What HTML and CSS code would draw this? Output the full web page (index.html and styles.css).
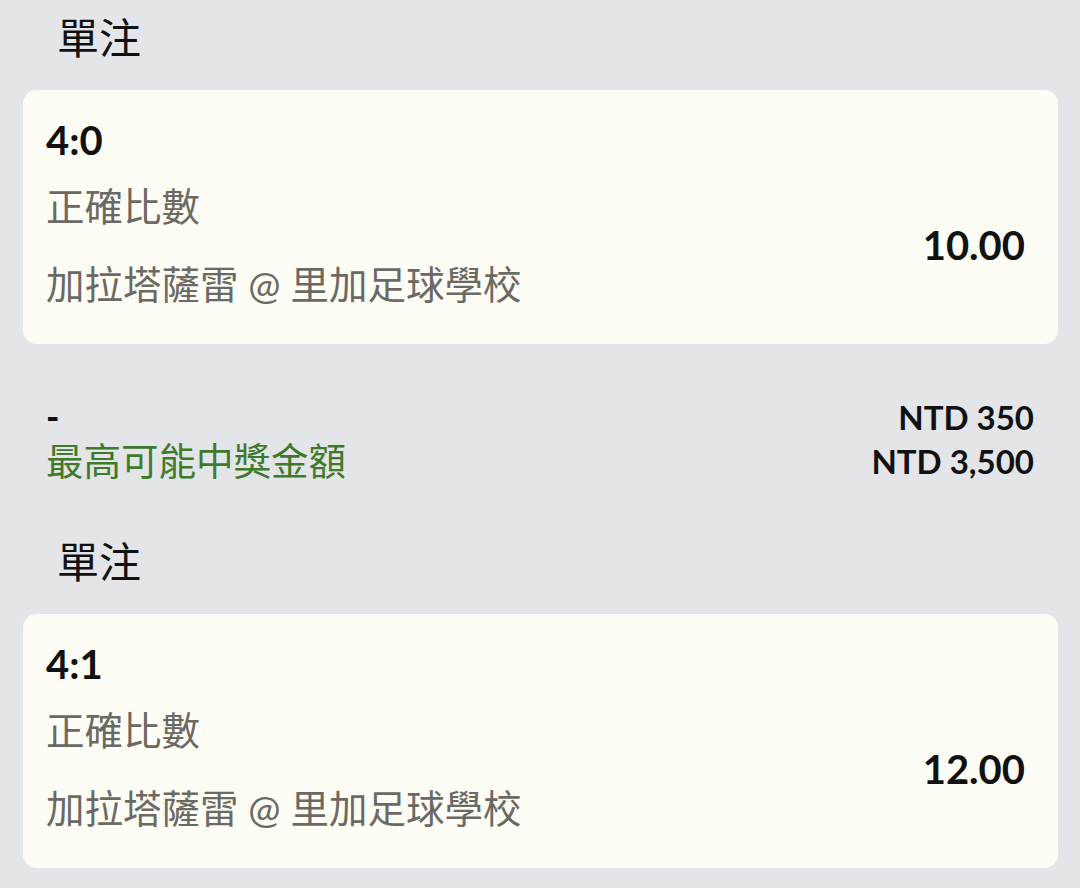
FILE: index.html
```html
<!DOCTYPE html>
<html lang="zh-Hant">
<head>
<meta charset="utf-8">
<title>單注</title>
<link rel="stylesheet" href="styles.css">
</head>
<body>
  <section class="group">
    <h2 class="group-title">單注</h2>
    <div class="card">
      <div class="bet-info">
        <div class="bet-score">4:0</div>
        <div class="bet-meta bet-type">正確比數</div>
        <div class="bet-meta bet-match">加拉塔薩雷 @ 里加足球學校</div>
      </div>
      <div class="bet-odds">10.00</div>
    </div>
  </section>

  <section class="summary">
    <div class="summary-row">
      <span class="summary-dash">-</span>
      <span class="summary-amount">NTD 350</span>
    </div>
    <div class="summary-row summary-row-center">
      <span class="summary-label">最高可能中獎金額</span>
      <span class="summary-amount">NTD 3,500</span>
    </div>
  </section>

  <section class="group group-second">
    <h2 class="group-title">單注</h2>
    <div class="card">
      <div class="bet-info">
        <div class="bet-score">4:1</div>
        <div class="bet-meta bet-type">正確比數</div>
        <div class="bet-meta bet-match">加拉塔薩雷 @ 里加足球學校</div>
      </div>
      <div class="bet-odds">12.00</div>
    </div>
  </section>
</body>
</html>
```

FILE: styles.css
```css
html, body {
  margin: 0;
  padding: 0;
}

body {
  background: #e4e5e8;
  font-family: Lato, "Noto Sans CJK TC", "Noto Sans", sans-serif;
  color: #111111;
  width: 1080px;
  height: 888px;
  overflow: hidden;
}

.group {
  padding-top: 10px;
}

.group-second {
  padding-top: 51px;
}

.group-title {
  margin: 0;
  padding-left: 57px;
  font-size: 42px;
  line-height: 56px;
  font-weight: 400;
  color: #111111;
}

.card {
  margin: 24px 22px 0 23px;
  background: #fefdf5;
  border-radius: 14px;
  padding: 26px 33px 21px 23px;
  display: flex;
  justify-content: space-between;
}

.bet-info {
  display: flex;
  flex-direction: column;
}

.bet-score {
  font-size: 40px;
  line-height: 48px;
  font-weight: 700;
  color: #111111;
}

.bet-meta {
  font-size: 38.5px;
  line-height: 78px;
  color: #6b6964;
}

.bet-type {
  margin-top: 3px;
}

.bet-odds {
  align-self: flex-end;
  margin-bottom: 54px;
  font-size: 40px;
  line-height: 48px;
  font-weight: 700;
  color: #111111;
}

.summary {
  margin-top: 50px;
  padding: 0 46px 0 46px;
}

.summary-row {
  display: flex;
  justify-content: space-between;
  align-items: baseline;
  line-height: 44px;
}

.summary-row-center {
  align-items: center;
}

.summary-dash {
  font-size: 36px;
  font-weight: 900;
}

.summary-amount {
  font-size: 33px;
  font-weight: 700;
  color: #111111;
}

.summary-label {
  font-size: 37.5px;
  color: #3f7a2b;
}
```
